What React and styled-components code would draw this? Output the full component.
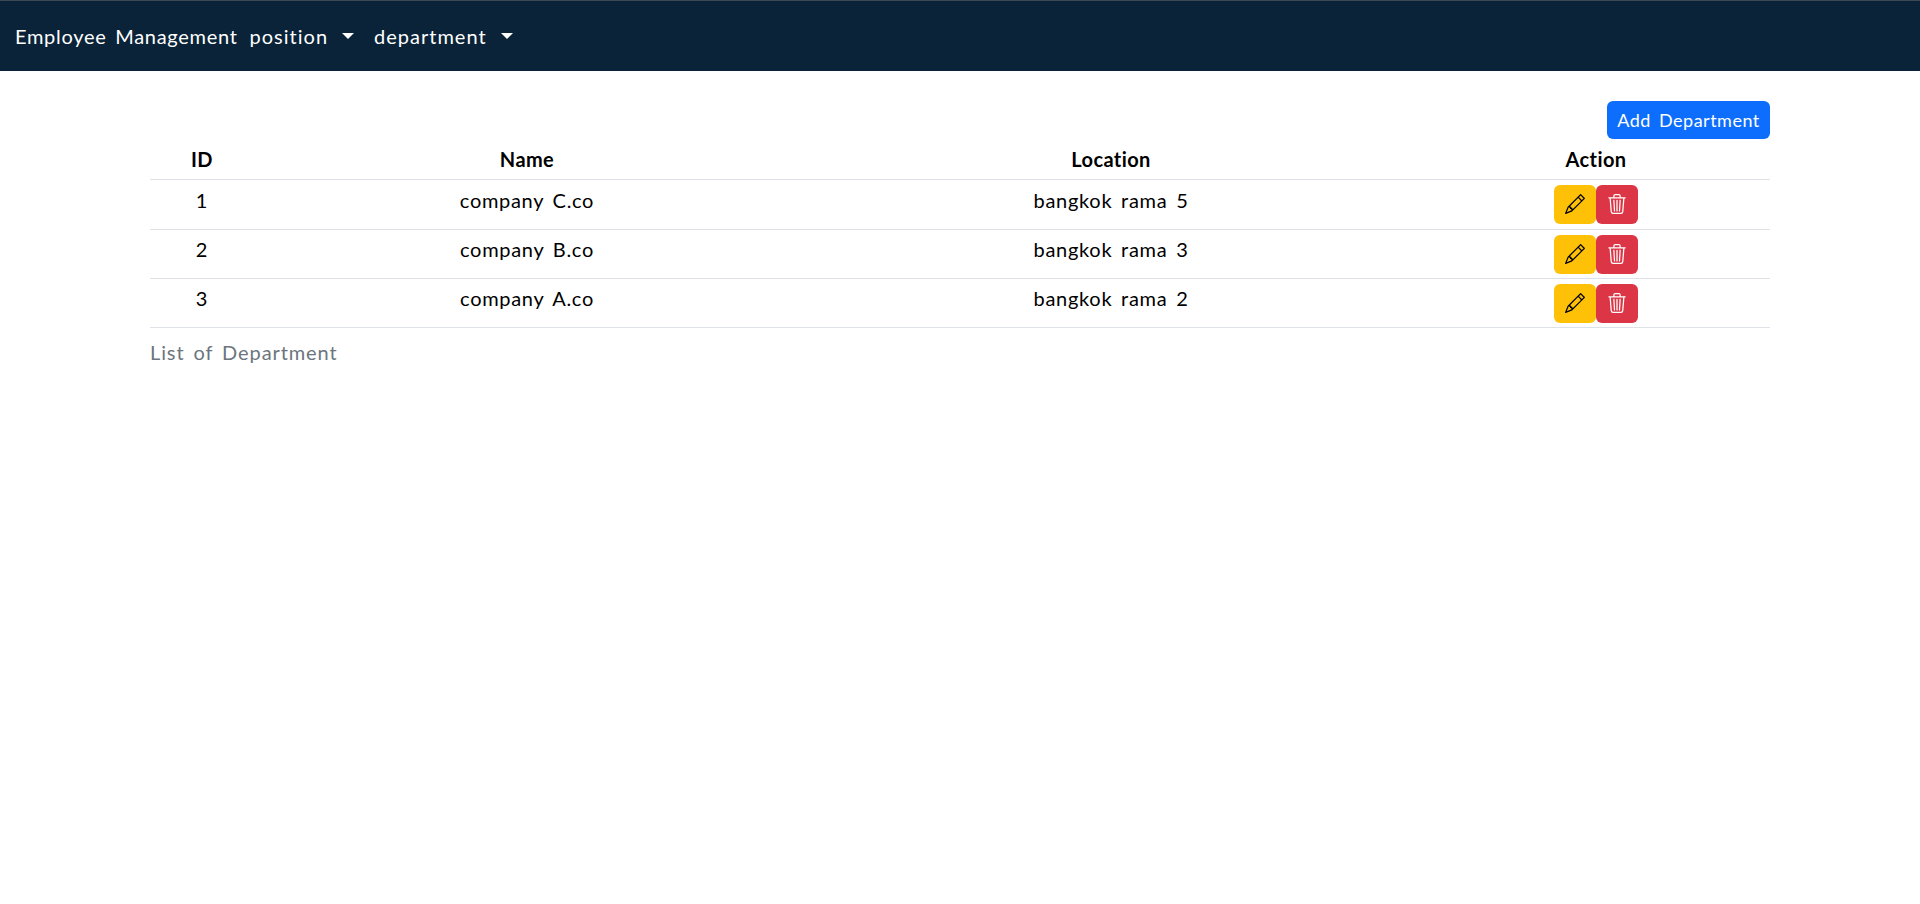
import React from "react";
import styled, { createGlobalStyle } from "styled-components";
import { BsPencil, BsTrash3 } from "react-icons/bs";

const GlobalStyle = createGlobalStyle`
  body {
    margin: 0;
    background: #fff;
    color: #000;
    font-family: "Lato", "Noto Sans", sans-serif;
    font-size: 20px;
    line-height: 24px;
    letter-spacing: 0.7px;
    word-spacing: 3px;
  }
`;

const NavBar = styled.nav`
  display: flex;
  align-items: center;
  height: 70px;
  padding-left: 15px;
  background: #0a2338;
  border-top: 1px solid #3c4a57;
  color: #fff;
  letter-spacing: 1px;
`;

const Brand = styled.a`
  margin-right: 12px;
  color: #fff;
  letter-spacing: 0.7px;
`;

const NavItem = styled.a`
  display: flex;
  align-items: center;
  margin-right: 20px;
  color: #fff;

  &::after {
    content: "";
    margin-left: 14px;
    border-top: 6px solid #fff;
    border-left: 6px solid transparent;
    border-right: 6px solid transparent;
  }
`;

const Page = styled.main`
  padding: 30px 150px 0;
`;

const Toolbar = styled.div`
  display: flex;
  justify-content: flex-end;
`;

const AddButton = styled.button`
  height: 38px;
  width: 163px;
  padding: 0;
  border: 0;
  border-radius: 6px;
  background: #0d6efd;
  color: #fff;
  font: inherit;
  font-size: 18px;
  letter-spacing: 0.5px;
  word-spacing: 3px;
`;

const Table = styled.table`
  width: 100%;
  border-collapse: collapse;
  table-layout: fixed;
  text-align: center;

  caption {
    caption-side: bottom;
    padding: 12px 0 8px;
    text-align: left;
    color: #6c757d;
    letter-spacing: 0.9px;
  }

  tbody tr:first-child td {
    height: 50px;
    padding-top: 8px;
  }

  tbody tr:first-child td:last-child {
    padding-top: 5px;
  }
`;

const HeadCell = styled.th`
  box-sizing: border-box;
  width: ${(p) => p.$width}px;
  height: 40px;
  padding: 0;
  border-bottom: 1px solid #dee2e6;
  font-weight: 700;
  letter-spacing: 0.4px;
`;

const Cell = styled.td`
  box-sizing: border-box;
  height: 49px;
  padding: 7px 0 0;
  border-bottom: 1px solid #dee2e6;
  vertical-align: top;
`;

const ActionCell = styled(Cell)`
  padding: 5px 0 4px;
`;

const Actions = styled.div`
  display: flex;
  justify-content: center;
`;

const IconButton = styled.button`
  display: flex;
  align-items: center;
  justify-content: center;
  width: 42px;
  height: 39px;
  padding: 0;
  border: 0;
  border-radius: 6px;
  background: ${(p) => (p.$danger ? "#dc3545" : "#ffc107")};
  color: ${(p) => (p.$danger ? "#fff" : "#000")};
  font-size: 20px;
`;

const departments = [
  { id: 1, name: "company C.co", location: "bangkok rama 5" },
  { id: 2, name: "company B.co", location: "bangkok rama 3" },
  { id: 3, name: "company A.co", location: "bangkok rama 2" },
];

export default function App() {
  return (
    <>
      <GlobalStyle />
      <NavBar>
        <Brand>Employee Management</Brand>
        <NavItem>position</NavItem>
        <NavItem>department</NavItem>
      </NavBar>
      <Page>
        <Toolbar>
          <AddButton>Add Department</AddButton>
        </Toolbar>
        <Table>
          <caption>List of Department</caption>
          <thead>
            <tr>
              <HeadCell $width={104}>ID</HeadCell>
              <HeadCell $width={546}>Name</HeadCell>
              <HeadCell $width={622}>Location</HeadCell>
              <HeadCell $width={348}>Action</HeadCell>
            </tr>
          </thead>
          <tbody>
            {departments.map((d) => (
              <tr key={d.id}>
                <Cell>{d.id}</Cell>
                <Cell>{d.name}</Cell>
                <Cell>{d.location}</Cell>
                <ActionCell>
                  <Actions>
                    <IconButton>
                      <BsPencil />
                    </IconButton>
                    <IconButton $danger>
                      <BsTrash3 />
                    </IconButton>
                  </Actions>
                </ActionCell>
              </tr>
            ))}
          </tbody>
        </Table>
      </Page>
    </>
  );
}
